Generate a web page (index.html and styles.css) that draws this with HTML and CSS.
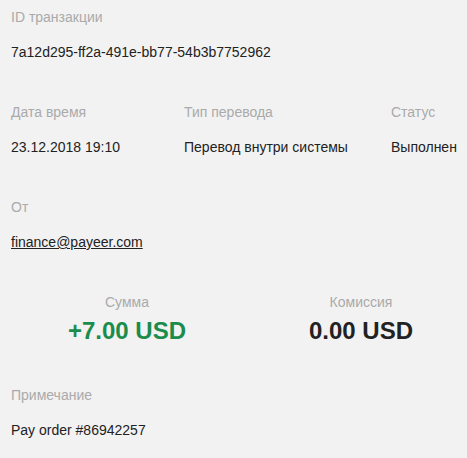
FILE: index.html
```html
<!DOCTYPE html>
<html lang="ru">
<head>
    <meta charset="UTF-8">
    <title>Транзакция</title>
    <link rel="stylesheet" href="styles.css">
</head>
<body>
    <div class="details">
        <div class="field">
            <div class="label">ID транзакции</div>
            <div class="value">7a12d295-ff2a-491e-bb77-54b3b7752962</div>
        </div>

        <div class="row">
            <div class="field">
                <div class="label">Дата время</div>
                <div class="value">23.12.2018 19:10</div>
            </div>
            <div class="field">
                <div class="label">Тип перевода</div>
                <div class="value">Перевод внутри системы</div>
            </div>
            <div class="field">
                <div class="label">Статус</div>
                <div class="value">Выполнен</div>
            </div>
        </div>

        <div class="field">
            <div class="label">От</div>
            <div class="value"><a href="#">finance@payeer.com</a></div>
        </div>

        <div class="sums">
            <div class="sum">
                <div class="label">Сумма</div>
                <div class="amount plus">+7.00 USD</div>
            </div>
            <div class="sum">
                <div class="label">Комиссия</div>
                <div class="amount">0.00 USD</div>
            </div>
        </div>

        <div class="field last">
            <div class="label">Примечание</div>
            <div class="value">Pay order #86942257</div>
        </div>
    </div>
</body>
</html>
```

FILE: styles.css
```css
body {
    margin: 0;
    background: #f2f2f2;
    font-family: "Liberation Sans", Arial, sans-serif;
    font-size: 14px;
    color: #222;
}
.details {
    padding: 8px 0 0 11px;
}
.field {
    height: 95px;
}
.field.last {
    height: auto;
}
.label {
    color: #aaa;
    line-height: 18px;
}
.value {
    margin-top: 17px;
    line-height: 18px;
}
.value a {
    color: #222;
}
.row {
    display: grid;
    grid-template-columns: 173px 207px auto;
}
.sums {
    display: grid;
    grid-template-columns: 234px 234px;
    margin-left: -1px;
    height: 93px;
}
.sum {
    text-align: center;
}
.amount {
    margin-top: 6px;
    font-size: 24px;
    font-weight: bold;
    line-height: 28px;
}
.plus {
    color: #1a8c4b;
}
```
